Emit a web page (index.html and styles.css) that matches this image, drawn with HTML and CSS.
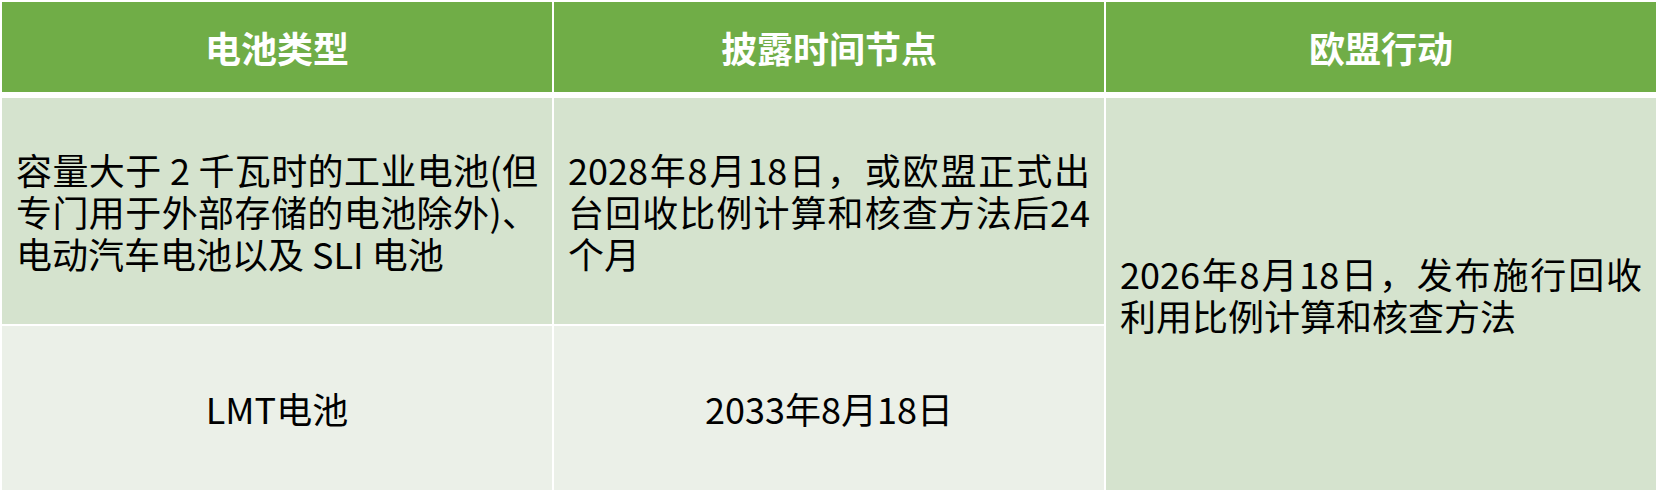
FILE: index.html
```html
<!DOCTYPE html>
<html lang="zh-CN">
<head>
<meta charset="utf-8">
<title>电池类型</title>
<link rel="stylesheet" href="styles.css">
</head>
<body>
<table class="grid">
  <colgroup><col class="c"><col class="c"><col class="c"></colgroup>
  <thead>
    <tr>
      <th class="head">电池类型</th>
      <th class="head">披露时间节点</th>
      <th class="head">欧盟行动</th>
    </tr>
  </thead>
  <tbody>
    <tr class="row1">
      <td class="cell band1">容量大于 2 千瓦时的工业电池(但专门用于外部存储的电池除外)、电动汽车电池以及 SLI 电池</td>
      <td class="cell band1">2028年8月18日，或欧盟正式出台回收比例计算和核查方法后24个月</td>
      <td class="cell band1" rowspan="2">2026年8月18日，发布施行回收利用比例计算和核查方法</td>
    </tr>
    <tr class="row2">
      <td class="cell band2 center">LMT电池</td>
      <td class="cell band2 center">2033年8月18日</td>
    </tr>
  </tbody>
</table>
</body>
</html>
```

FILE: styles.css
```css
html, body {
  margin: 0;
  padding: 0;
  background: #ffffff;
}

.grid {
  border-collapse: separate;
  border-spacing: 2px;
  table-layout: fixed;
  width: 1658px;
  font-family: "Noto Sans CJK SC", "Noto Sans", sans-serif;
  font-size: 36px;
  line-height: 42px;
  color: #000000;
}

.c {
  width: 550px;
}

.head {
  height: 90px;
  padding: 0 14px;
  background: #70ad47;
  color: #ffffff;
  font-weight: 700;
  text-align: center;
  vertical-align: middle;
  border-bottom: 4px solid #ffffff;
  box-sizing: content-box;
}

.row1 {
  height: 226px;
}

.row2 {
  height: 164px;
}

.cell {
  padding: 0 14px;
  text-align: justify;
  text-justify: inter-character;
  vertical-align: middle;
}

.band1 {
  background: #d5e3ce;
}

.band2 {
  background: #ebf0e8;
}

.center {
  text-align: center;
}
```
